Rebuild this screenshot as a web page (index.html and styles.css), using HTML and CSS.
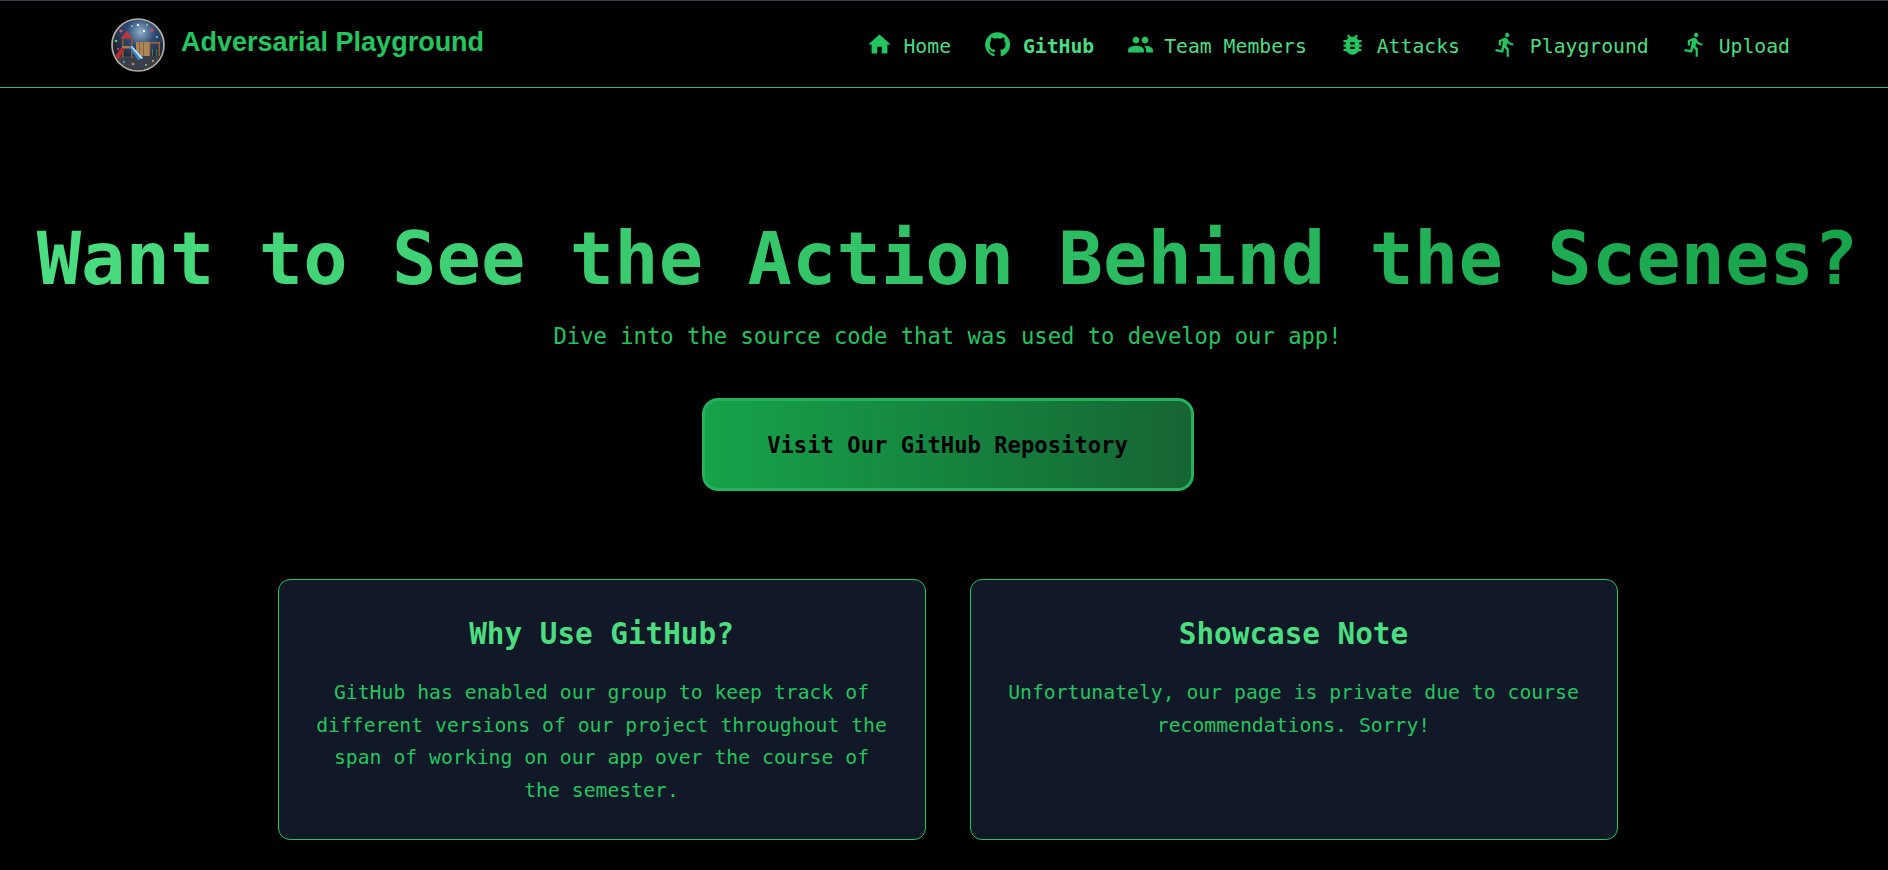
FILE: index.html
```html
<!DOCTYPE html>
<html lang="en">
<head>
  <meta charset="UTF-8">
  <meta name="viewport" content="width=device-width, initial-scale=1.0">
  <title>Adversarial Playground</title>
  <link rel="stylesheet" href="styles.css">
</head>
<body>
  <nav class="navbar">
    <a class="brand" href="#">
      <svg class="logo" viewBox="0 0 54 54">
        <defs>
          <radialGradient id="sky" cx="55%" cy="25%" r="60%">
            <stop offset="0" stop-color="#8fb0cc"/>
            <stop offset="0.45" stop-color="#2f4b74"/>
            <stop offset="1" stop-color="#1a2234"/>
          </radialGradient>
          <clipPath id="round"><circle cx="27" cy="27" r="25"/></clipPath>
        </defs>
        <circle cx="27" cy="27" r="26" fill="url(#sky)" stroke="#b8aea0" stroke-width="1.700"/>
        <g clip-path="url(#round)">
          <rect x="0" y="38" width="54" height="16" fill="#3a3f4c"/>
          <rect x="25" y="24" width="13" height="14" fill="#a98655"/>
          <rect x="28" y="24" width="1" height="14" fill="#8c6238"/>
          <rect x="32" y="24" width="1" height="14" fill="#8c6238"/>
          <rect x="38" y="24" width="11" height="1.500" fill="#a8683a"/>
          <rect x="38" y="24" width="1.300" height="14" fill="#a8683a"/>
          <rect x="47.500" y="24" width="1.300" height="14" fill="#a8683a"/>
          <rect x="41" y="31" width="0.800" height="7" fill="#4a8f48"/>
          <rect x="45" y="31" width="0.800" height="7" fill="#4a8f48"/>
          <rect x="11" y="20" width="1.600" height="20" fill="#8a5a33"/>
          <rect x="20" y="20" width="1.600" height="20" fill="#8a5a33"/>
          <rect x="11" y="28" width="11" height="2.500" fill="#b07a45"/>
          <polygon points="15.700,13 9.500,20.500 22,20.500" fill="#c0343c"/>
          <polygon points="10,30 14,30 8,41 2,41" fill="#b82a32"/>
          <polygon points="18,29 21,28 32,40 27,42" fill="#2f86cc"/>
          <polygon points="20,29 21,28 32,40 30,41" fill="#bfe0f2"/>
          <circle cx="10" cy="13" r="1.600" fill="#d8505c"/>
          <circle cx="27" cy="7" r="1.300" fill="#d8ecf4"/>
          <circle cx="21" cy="8" r="1" fill="#7fc0e8"/>
          <circle cx="33" cy="13" r="1.200" fill="#eaf4fa"/>
          <circle cx="41" cy="12" r="1.700" fill="#c84a58"/>
          <circle cx="46" cy="19" r="1.200" fill="#5aa8e0"/>
          <circle cx="36" cy="7" r="1" fill="#8fd08f"/>
          <circle cx="5" cy="23" r="1.300" fill="#60c860"/>
          <circle cx="7" cy="31" r="1" fill="#e05060"/>
          <circle cx="22" cy="46" r="1.300" fill="#d08a40"/>
          <circle cx="35" cy="47" r="1" fill="#70c870"/>
          <circle cx="13" cy="44" r="0.900" fill="#70b0e0"/>
          <circle cx="42" cy="43" r="0.900" fill="#e0c060"/>
        </g>
      </svg>
      <span class="brand-name">Adversarial Playground</span>
    </a>
    <ul class="nav-links">
      <li><a href="#">
        <svg class="icon" viewBox="0 0 24 24"><path d="M10 20v-6h4v6h5v-8h3L12 3 2 12h3v8z"/></svg>
        Home</a></li>
      <li><a class="current" href="#">
        <svg class="icon icon-gh" viewBox="0 0 24 24"><path d="M12 1.900A10.200 10.200 0 0 0 1.800 12.100c0 4.500 2.900 8.300 7 9.700.5.100.7-.2.7-.5v-1.900c-2.800.6-3.400-1.200-3.400-1.200-.5-1.200-1.100-1.500-1.100-1.500-.9-.6.100-.6.100-.6 1 .1 1.600 1 1.600 1 .9 1.600 2.400 1.100 3 .9.1-.7.4-1.100.6-1.400-2.300-.3-4.600-1.100-4.600-5 0-1.100.4-2 1-2.700-.1-.3-.4-1.300.1-2.700 0 0 .9-.3 2.800 1a9.700 9.700 0 0 1 5.100 0c1.900-1.300 2.800-1 2.800-1 .6 1.400.2 2.400.1 2.700.6.700 1 1.600 1 2.700 0 3.900-2.400 4.700-4.600 5 .4.300.7.900.7 1.900v2.800c0 .3.200.6.700.5 4.100-1.400 7-5.200 7-9.700A10.200 10.200 0 0 0 12 1.900z"/></svg>
        GitHub</a></li>
      <li><a href="#">
        <svg class="icon" viewBox="0 0 24 24"><path d="M16 11c1.660 0 2.990-1.340 2.990-3S17.660 5 16 5s-3 1.340-3 3 1.340 3 3 3zm-8 0c1.660 0 2.990-1.340 2.990-3S9.660 5 8 5 5 6.340 5 8s1.340 3 3 3zm0 2c-2.330 0-7 1.170-7 3.500V19h14v-2.500c0-2.330-4.670-3.500-7-3.500zm8 0c-.290 0-.620.020-.970.050 1.160.840 1.970 1.970 1.970 3.450V19h6v-2.500c0-2.330-4.670-3.500-7-3.500z"/></svg>
        Team Members</a></li>
      <li><a href="#">
        <svg class="icon" viewBox="0 0 24 24"><path d="M20 8h-2.810c-.450-.780-1.070-1.450-1.820-1.960L17 4.410 15.590 3l-2.170 2.170C12.960 5.060 12.490 5 12 5c-.490 0-.960.060-1.410.170L8.410 3 7 4.410l1.620 1.630C7.880 6.550 7.260 7.220 6.810 8H4v2h2.090c-.050.330-.090.660-.090 1v1H4v2h2v1c0 .340.040.670.090 1H4v2h2.810c1.040 1.790 2.970 3 5.190 3s4.150-1.210 5.190-3H20v-2h-2.090c.050-.330.090-.660.090-1v-1h2v-2h-2v-1c0-.340-.040-.670-.090-1H20V8zm-6 8h-4v-2h4v2zm0-4h-4v-2h4v2z"/></svg>
        Attacks</a></li>
      <li><a href="#">
        <svg class="icon" viewBox="0 0 24 24"><path d="M13.490 5.480c1.100 0 2-.900 2-2s-.900-2-2-2-2 .900-2 2 .900 2 2 2zm-3.600 13.900l1-4.400 2.100 2v6h2v-7.500l-2.100-2 .600-3c1.300 1.500 3.300 2.500 5.500 2.500v-2c-1.900 0-3.500-1-4.300-2.400l-1-1.600c-.400-.600-1-1-1.700-1-.300 0-.500.100-.800.100l-5.200 2.200v4.700h2v-3.400l1.800-.700-1.600 8.100-4.900-1-.400 2 7 1.400z"/></svg>
        Playground</a></li>
      <li><a href="#">
        <svg class="icon" viewBox="0 0 24 24"><path d="M13.490 5.480c1.100 0 2-.900 2-2s-.900-2-2-2-2 .900-2 2 .900 2 2 2zm-3.600 13.900l1-4.400 2.100 2v6h2v-7.500l-2.100-2 .600-3c1.300 1.500 3.300 2.500 5.500 2.500v-2c-1.900 0-3.500-1-4.300-2.400l-1-1.600c-.400-.600-1-1-1.700-1-.300 0-.500.100-.800.100l-5.200 2.200v4.700h2v-3.400l1.800-.700-1.600 8.100-4.900-1-.400 2 7 1.400z"/></svg>
        Upload</a></li>
    </ul>
  </nav>

  <main class="content">
    <section class="hero">
      <h1>Want to See the Action Behind the Scenes?</h1>
      <p class="lead">Dive into the source code that was used to develop our app!</p>
      <a class="repo-btn" href="#">Visit Our GitHub Repository</a>
    </section>

    <section class="cards">
      <div class="card">
        <h2>Why Use GitHub?</h2>
        <p>GitHub has enabled our group to keep track of different versions of our project throughout the span of working on our app over the course of the semester.</p>
      </div>
      <div class="card">
        <h2>Showcase Note</h2>
        <p>Unfortunately, our page is private due to course recommendations. Sorry!</p>
      </div>
    </section>
  </main>
</body>
</html>
```

FILE: styles.css
```css
* {
  box-sizing: border-box;
}
html, body {
  margin: 0;
  height: 100%;
}
body {
  background-color: #000;
  color: #22c55e;
  font-family: "DejaVu Sans Mono", monospace;
  overflow: hidden;
}
a {
  color: inherit;
  text-decoration: none;
}

.navbar {
  height: 88px;
  display: flex;
  align-items: center;
  justify-content: space-between;
  padding: 0 98px 0 111px;
  border-top: 1px solid #374151;
  border-bottom: 1px solid #22c55e;
}
.brand {
  display: flex;
  align-items: center;
  gap: 16px;
}
.logo {
  width: 54px;
  height: 54px;
  margin-top: 1px;
}
.brand-name {
  font-family: "Liberation Sans", Arial, sans-serif;
  font-size: 27px;
  font-weight: 700;
  color: #22c55e;
  margin-bottom: 3px;
}
.nav-links {
  display: flex;
  align-items: center;
  gap: 32.400px;
  margin: 0;
  padding: 4px 0 0;
  list-style: none;
}
.nav-links a {
  display: flex;
  align-items: center;
  gap: 10.500px;
  font-size: 19.750px;
  color: #4ade80;
}
.nav-links .current {
  font-weight: 700;
}
.icon {
  width: 27px;
  height: 27px;
  fill: #22c55e;
  margin-top: -4px;
}
.icon-gh {
  width: 29px;
  height: 29px;
}

.content {
  padding-left: 7px;
}
.hero {
  display: flex;
  flex-direction: column;
  align-items: center;
  padding-top: 124px;
}
.hero h1 {
  margin: 0;
  font-size: 73.800px;
  line-height: 92px;
  font-weight: 700;
  white-space: nowrap;
  background: linear-gradient(to right, #4ade80, #16a34a);
  -webkit-background-clip: text;
  background-clip: text;
  color: transparent;
}
.lead {
  margin: 18px 0 0;
  font-size: 22.200px;
  line-height: 28px;
  color: #22c55e;
}
.repo-btn {
  display: flex;
  align-items: center;
  justify-content: center;
  width: 492px;
  height: 93px;
  margin-top: 48px;
  font-size: 22.200px;
  font-weight: 700;
  color: #000;
  background: linear-gradient(to right, #16a34a, #166534);
  border: 3px solid #24b25c;
  border-radius: 16px;
}

.cards {
  display: flex;
  justify-content: center;
  gap: 44px;
  margin-top: 88px;
}
.card {
  width: 648px;
  height: 261px;
  padding: 32px 36px;
  text-align: center;
  background-color: #111827;
  border: 1px solid #22c55e;
  border-radius: 12px;
}
.card h2 {
  margin: 0 0 21px;
  font-size: 29.300px;
  line-height: 44px;
  font-weight: 700;
  color: #4ade80;
}
.card p {
  margin: 0;
  font-size: 19.750px;
  line-height: 32.500px;
  color: #22c55e;
}
```
